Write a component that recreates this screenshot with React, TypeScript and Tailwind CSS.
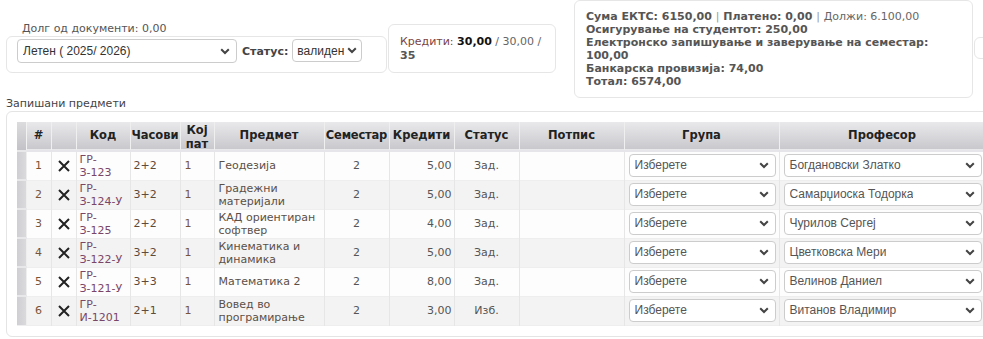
import React from "react";

type Row = {
  n: number;
  code: [string, string];
  hours: string;
  pat: string;
  subject: string[];
  sem: string;
  credits: string;
  status: string;
  prof: string;
};

const rows: Row[] = [
  { n: 1, code: ["ГР-", "З-123"], hours: "2+2", pat: "1", subject: ["Геодезија"], sem: "2", credits: "5,00", status: "Зад.", prof: "Богдановски Златко" },
  { n: 2, code: ["ГР-", "З-124-У"], hours: "3+2", pat: "1", subject: ["Градежни", "материјали"], sem: "2", credits: "5,00", status: "Зад.", prof: "Самарџиоска Тодорка" },
  { n: 3, code: ["ГР-", "З-125"], hours: "2+2", pat: "1", subject: ["КАД ориентиран", "софтвер"], sem: "2", credits: "4,00", status: "Зад.", prof: "Чурилов Сергеј" },
  { n: 4, code: ["ГР-", "З-122-У"], hours: "3+2", pat: "1", subject: ["Кинематика и", "динамика"], sem: "2", credits: "5,00", status: "Зад.", prof: "Цветковска Мери" },
  { n: 5, code: ["ГР-", "З-121-У"], hours: "3+3", pat: "1", subject: ["Математика 2"], sem: "2", credits: "8,00", status: "Зад.", prof: "Велинов Даниел" },
  { n: 6, code: ["ГР-", "И-1201"], hours: "2+1", pat: "1", subject: ["Вовед во", "програмирање"], sem: "2", credits: "3,00", status: "Изб.", prof: "Витанов Владимир" },
];

function Chevron() {
  return (
    <svg width="10" height="7" viewBox="0 0 10 7" className="shrink-0">
      <polyline points="1.2,1.2 5,5 8.8,1.2" fill="none" stroke="#444" strokeWidth="2" />
    </svg>
  );
}

function FakeSelect({ label, className }: { label: string; className: string }) {
  return (
    <div
      className={`flex shrink-0 items-center justify-between gap-[2px] rounded-[4px] border border-[#cccccc] bg-white font-['Liberation_Sans',Arial,sans-serif] text-[12px] ${className}`}
    >
      <span className="overflow-hidden whitespace-nowrap">{label}</span>
      <Chevron />
    </div>
  );
}

function XIcon() {
  return (
    <svg width="14" height="14" viewBox="0 0 14 14">
      <path d="M2 2 L12 12 M12 2 L2 12" stroke="#222" strokeWidth="2" />
    </svg>
  );
}

const th = "border-r border-[#efefef] font-bold text-[11.5px] text-[#222] text-center align-middle";
const td = "border-r border-[#e6e6e6] text-[11px] leading-[13px] align-middle";

export default function App() {
  return (
    <div className="w-[983px] h-[339px] overflow-hidden bg-white font-['DejaVu_Sans',Verdana,sans-serif] text-[#555]">
      {/* top summary */}
      <div className="flex items-start">
        <div className="ml-[6px] flex shrink-0 flex-col">
          <div className="pt-[22px] pl-[16px] h-[36px] text-[11px] leading-[14px] text-[#555]">Долг од документи: 0,00</div>
          <div className="w-[381px] h-[37px] rounded-[6px] border border-[#e6e6e6] flex items-start pt-[2px] pl-[10px]">
            <FakeSelect label="Летен ( 2025/ 2026)" className="w-[220px] h-[24px] pl-[5px] pr-[6px] text-[#333]" />
            <span className="ml-[5px] mt-[5px] text-[11px] font-bold text-[#444]">Статус:</span>
            <FakeSelect label="валиден" className="ml-[4px] w-[70px] h-[23px] pl-[4px] pr-[4px] text-[#333]" />
          </div>
        </div>
        <div className="ml-[1px] mt-[24px] w-[168px] h-[49px] shrink-0 rounded-[6px] border border-[#e6e6e6] pl-[11px] pt-[10px] text-[11px] leading-[14px] text-[#666]">
          <span className="text-[#7a4444]">Кредити:</span> <b className="text-[#111]">30,00</b> / 30,00 /
          <br />
          <b className="text-[#555]">35</b>
        </div>
        <div className="ml-[18px] w-[399px] h-[98px] shrink-0 rounded-[6px] border border-[#e6e6e6] pl-[11px] pt-[9px] text-[11px] leading-[13px] font-bold text-[#555]">
          Сума ЕКТС: 6150,00 <span className="font-normal text-[#999]">|</span> Платено: 0,00{" "}
          <span className="font-normal text-[#999]">|</span> <span className="font-normal text-[#666]">Должи: 6.100,00</span>
          <br />
          Осигурување на студентот: 250,00
          <br />
          Електронско запишување и заверување на семестар:
          <br />
          100,00
          <br />
          Банкарска провизија: 74,00
          <br />
          Тотал: 6574,00
        </div>
        <div className="ml-[1px] mt-[37px] w-[30px] h-[22px] shrink-0 rounded-[6px] border border-[#e6e6e6]" />
      </div>

      <div className="ml-[6px] h-[13px] text-[11px] leading-[12px] text-[#444]">Запишани предмети</div>

      {/* enrolled subjects table */}
      <div className="ml-[6px] w-[1000px] rounded-[6px] border border-[#e4e4e4] pt-[10px] pl-[10px] pb-[10px]">
        <table className="table-fixed border-collapse w-[968px]">
          <colgroup>
            <col className="w-[9px]" />
            <col className="w-[25px]" />
            <col className="w-[25px]" />
            <col className="w-[54px]" />
            <col className="w-[50px]" />
            <col className="w-[34px]" />
            <col className="w-[110px]" />
            <col className="w-[65px]" />
            <col className="w-[65px]" />
            <col className="w-[65px]" />
            <col className="w-[105px]" />
            <col className="w-[155px]" />
            <col className="w-[206px]" />
          </colgroup>
          <thead>
            <tr className="h-[28px] bg-gradient-to-b from-[#e9e9ec] to-[#c9c9cd] border-b-[2px] border-[#e6e6ea]">
              <th className="border-r border-[#f2f2f2] bg-gradient-to-b from-[#dcdcdf] to-[#c3c3c7]" />
              <th className={th}>#</th>
              <th className={th} />
              <th className={th}>Код</th>
              <th className={th}>Часови</th>
              <th className={`${th} leading-[14px]`}>
                <div className="h-[28px] overflow-hidden pt-[1px]">Кој<br />пат</div>
              </th>
              <th className={th}>Предмет</th>
              <th className={`${th} tracking-[-0.2px]`}>Семестар</th>
              <th className={th}>Кредити</th>
              <th className={th}>Статус</th>
              <th className={th}>Потпис</th>
              <th className={th}>Група</th>
              <th className={th}>Професор</th>
            </tr>
          </thead>
          <tbody>
            {rows.map((r, i) => (
              <tr key={r.n} className={`h-[29px] ${i % 2 === 0 ? "bg-[#fdfdfd]" : "bg-[#f3f3f3]"} border-b border-[#eeeeee]`}>
                <td className="border-r border-[#eeeeee] bg-gradient-to-r from-[#cfcfd3] to-[#dadadd] border-t-[2px] border-t-[#e8e8ea]" />
                <td className={`${td} text-center text-[#7a5535]`}>{r.n}</td>
                <td className={`${td} text-center`}>
                  <div className="flex justify-center pt-[1px]">
                    <XIcon />
                  </div>
                </td>
                <td className={`${td} pl-[3px] text-[#7a4668]`}>
                  {r.code[0]}
                  <br />
                  {r.code[1]}
                </td>
                <td className={`${td} pl-[3px] text-[#5e4a3a]`}>{r.hours}</td>
                <td className={`${td} pl-[4px] text-[#7a5535]`}>{r.pat}</td>
                <td className={`${td} pl-[4px] text-[#5a5048]`}>
                  {r.subject.map((s, k) => (
                    <React.Fragment key={k}>
                      {k > 0 && <br />}
                      {s}
                    </React.Fragment>
                  ))}
                </td>
                <td className={`${td} text-center`}>{r.sem}</td>
                <td className={`${td} text-right pr-[2px]`}>{r.credits}</td>
                <td className={`${td} text-center`}>{r.status}</td>
                <td className={td} />
                <td className={`${td} pl-[4px] pr-[3px]`}>
                  <FakeSelect label="Изберете" className="h-[23px] w-full pl-[5px] pr-[6px] text-[#555]" />
                </td>
                <td className={`${td} pl-[4px] pr-[4px]`}>
                  <FakeSelect label={r.prof} className="h-[23px] w-[198px] pl-[5px] pr-[6px] text-[#555]" />
                </td>
              </tr>
            ))}
          </tbody>
        </table>
      </div>
    </div>
  );
}
